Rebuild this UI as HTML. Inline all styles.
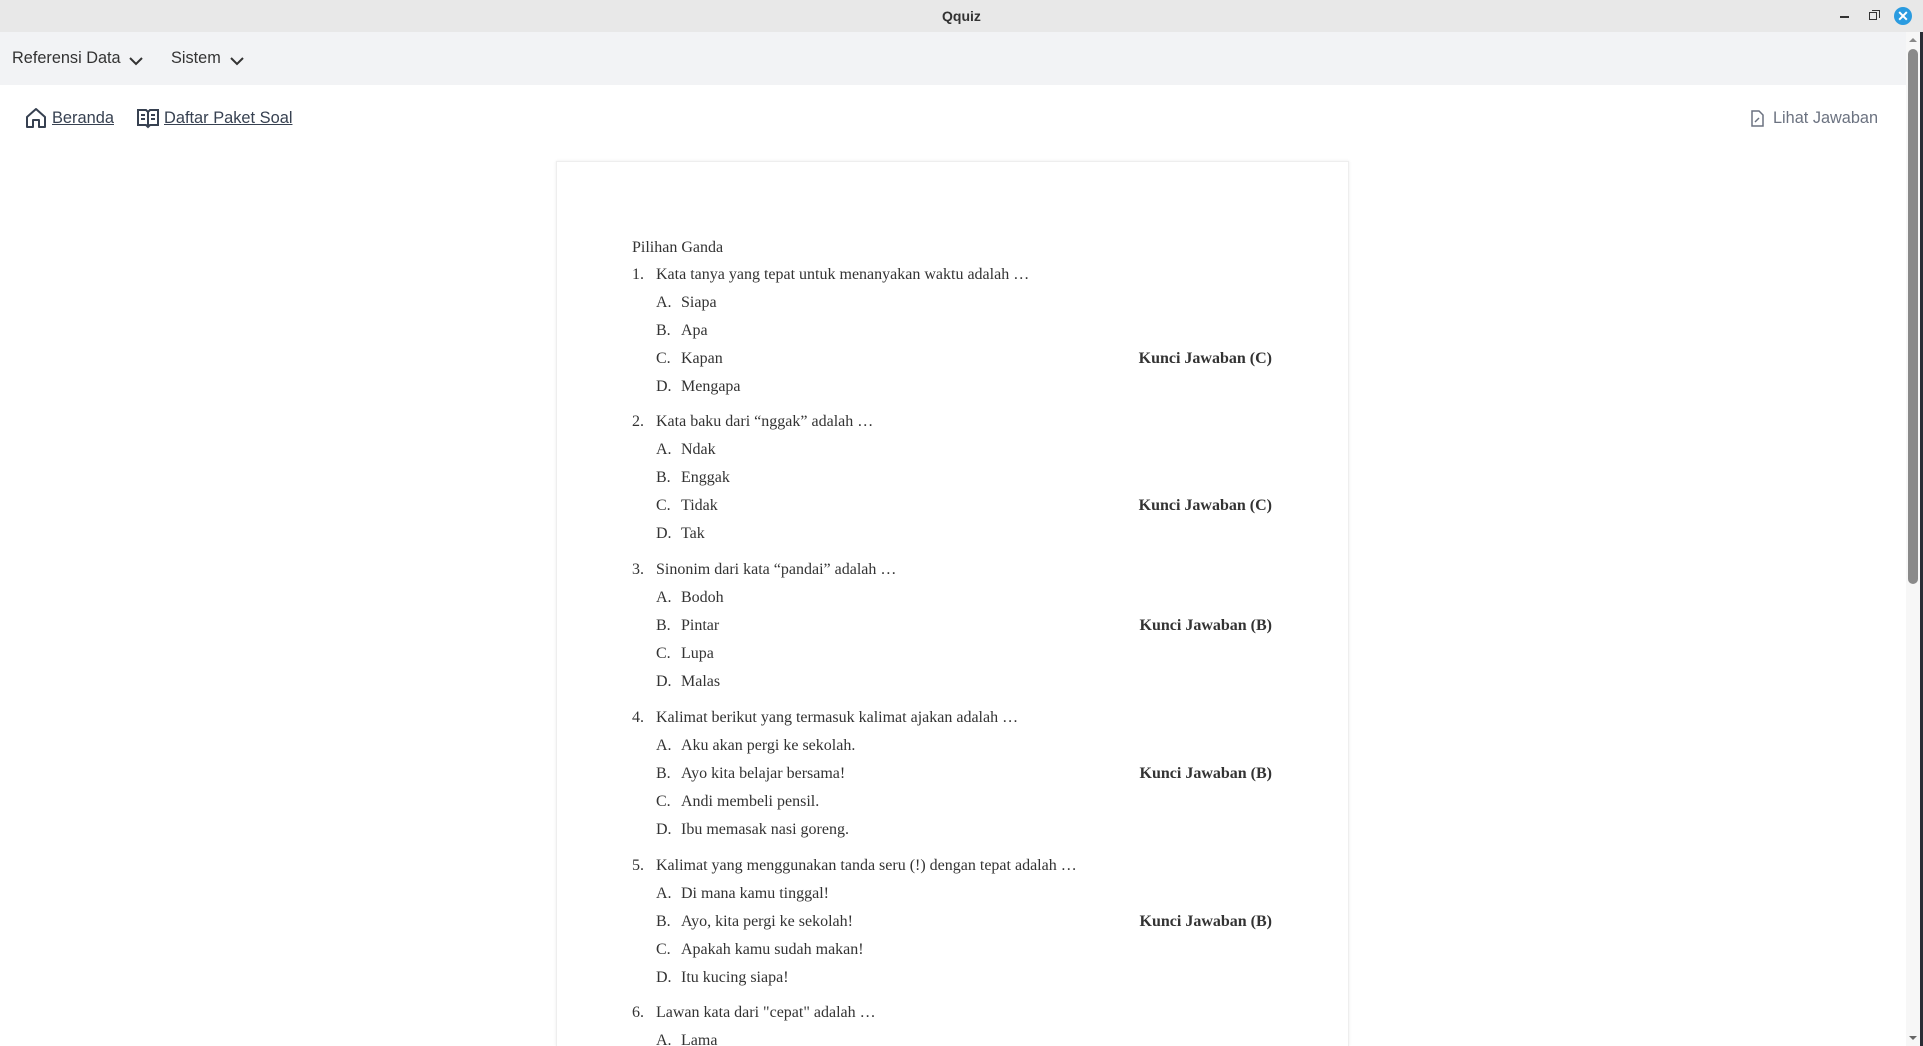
<!DOCTYPE html>
<html><head><meta charset="utf-8"><style>
*{margin:0;padding:0;box-sizing:border-box}
html,body{width:1923px;height:1046px;overflow:hidden;background:#fff;font-family:"Liberation Sans",sans-serif;position:relative}
.title{position:absolute;left:0;top:0;width:1923px;height:32px;background:#e8e8e8;text-align:center;font-weight:bold;font-size:14px;line-height:32px;color:#333}
.menu{position:absolute;left:0;top:32px;width:1906px;height:53px;background:#f2f3f5;font-size:16.3px;color:#333}
.menu span{position:absolute;top:17px}
.bc{position:absolute;top:106px;font-size:16.4px;color:#374151;text-decoration:underline;line-height:24px}
.paper{position:absolute;left:556px;top:161px;width:793px;height:885px;background:#fff;border:1px solid #eee;border-bottom:none;box-shadow:0 0 3px rgba(0,0,0,.08);font-family:"Liberation Serif",serif;font-size:16px;color:#333;overflow:hidden}
.c{position:absolute;left:75px;right:76px;top:74px}
.ph{height:24.5px;line-height:24.5px}
.q{height:147.8px;position:relative}
.l{height:28px;line-height:28px;position:relative;white-space:nowrap}
.n{position:absolute;left:0}
.qt{position:absolute;left:24px}
.ol{position:absolute;left:24px}
.ot{position:absolute;left:49px}
.k{position:absolute;right:0;font-weight:bold}
.sb{position:absolute;left:1906px;top:32px;width:14px;height:1014px;background:#f7f7f7}
.th{position:absolute;left:1908px;top:49px;width:10px;height:535px;background:#8a8a8a;border-radius:5px}
</style></head><body>
<div class="title">Qquiz</div>
<div style="position:absolute;left:1840px;top:16px;width:9px;height:1.5px;background:#333"></div>
<div style="position:absolute;left:1869px;top:12px;width:8px;height:8px;border:1.5px solid #333"></div>
<div style="position:absolute;left:1872px;top:10px;width:8px;height:8px;border-top:1px solid #333;border-right:1px solid #333"></div>
<div style="position:absolute;left:1894px;top:7px;width:18px;height:18px;border-radius:50%;background:#2a9be0;color:#fff;font-size:14px;font-weight:bold;text-align:center;line-height:18px">✕</div>
<div class="menu">
<span style="left:12px">Referensi Data</span>
<svg style="position:absolute;left:128px;top:23px" width="16" height="12" viewBox="0 0 16 12"><path d="M2 3l6 6 6-6" fill="none" stroke="#333" stroke-width="2"/></svg>
<span style="left:171px">Sistem</span>
<svg style="position:absolute;left:229px;top:23px" width="16" height="12" viewBox="0 0 16 12"><path d="M2 3l6 6 6-6" fill="none" stroke="#333" stroke-width="2"/></svg>
</div>
<svg style="position:absolute;left:25px;top:107px" width="22" height="22" viewBox="0 0 22 22"><path d="M2 10L11 2l9 8v10H14v-7H8v7H2z" fill="none" stroke="#374151" stroke-width="2" stroke-linejoin="round"/></svg>
<span class="bc" style="left:52px">Beranda</span>
<svg style="position:absolute;left:137px;top:107px" width="22" height="22" viewBox="0 0 22 22"><path d="M1 3h8l2 2 2-2h8v15h-8l-2 2-2-2H1z M11 5v15 M4 8h4M4 12h4M14 8h4M14 12h4" fill="none" stroke="#374151" stroke-width="2"/></svg>
<span class="bc" style="left:164px">Daftar Paket Soal</span>
<svg style="position:absolute;left:1750px;top:110px" width="14" height="17" viewBox="0 0 14 17"><path d="M2 1h7l4 4v11H2z M5 12l4-4" fill="none" stroke="#6b7280" stroke-width="1.5"/></svg>
<span style="position:absolute;left:1773px;top:106px;font-size:16.3px;color:#6b7280;line-height:24px">Lihat Jawaban</span>
<div class="paper"><div class="c">
<div class="ph">Pilihan Ganda</div>
<div class="q"><div class="l"><span class="n">1.</span><span class="qt">Kata tanya yang tepat untuk menanyakan waktu adalah …</span></div>
<div class="l"><span class="ol">A.</span><span class="ot">Siapa</span></div>
<div class="l"><span class="ol">B.</span><span class="ot">Apa</span></div>
<div class="l"><span class="ol">C.</span><span class="ot">Kapan</span><span class="k">Kunci Jawaban (C)</span></div>
<div class="l"><span class="ol">D.</span><span class="ot">Mengapa</span></div></div>
<div class="q"><div class="l"><span class="n">2.</span><span class="qt">Kata baku dari “nggak” adalah …</span></div>
<div class="l"><span class="ol">A.</span><span class="ot">Ndak</span></div>
<div class="l"><span class="ol">B.</span><span class="ot">Enggak</span></div>
<div class="l"><span class="ol">C.</span><span class="ot">Tidak</span><span class="k">Kunci Jawaban (C)</span></div>
<div class="l"><span class="ol">D.</span><span class="ot">Tak</span></div></div>
<div class="q"><div class="l"><span class="n">3.</span><span class="qt">Sinonim dari kata “pandai” adalah …</span></div>
<div class="l"><span class="ol">A.</span><span class="ot">Bodoh</span></div>
<div class="l"><span class="ol">B.</span><span class="ot">Pintar</span><span class="k">Kunci Jawaban (B)</span></div>
<div class="l"><span class="ol">C.</span><span class="ot">Lupa</span></div>
<div class="l"><span class="ol">D.</span><span class="ot">Malas</span></div></div>
<div class="q"><div class="l"><span class="n">4.</span><span class="qt">Kalimat berikut yang termasuk kalimat ajakan adalah …</span></div>
<div class="l"><span class="ol">A.</span><span class="ot">Aku akan pergi ke sekolah.</span></div>
<div class="l"><span class="ol">B.</span><span class="ot">Ayo kita belajar bersama!</span><span class="k">Kunci Jawaban (B)</span></div>
<div class="l"><span class="ol">C.</span><span class="ot">Andi membeli pensil.</span></div>
<div class="l"><span class="ol">D.</span><span class="ot">Ibu memasak nasi goreng.</span></div></div>
<div class="q"><div class="l"><span class="n">5.</span><span class="qt">Kalimat yang menggunakan tanda seru (!) dengan tepat adalah …</span></div>
<div class="l"><span class="ol">A.</span><span class="ot">Di mana kamu tinggal!</span></div>
<div class="l"><span class="ol">B.</span><span class="ot">Ayo, kita pergi ke sekolah!</span><span class="k">Kunci Jawaban (B)</span></div>
<div class="l"><span class="ol">C.</span><span class="ot">Apakah kamu sudah makan!</span></div>
<div class="l"><span class="ol">D.</span><span class="ot">Itu kucing siapa!</span></div></div>
<div class="q" style="height:56px"><div class="l"><span class="n">6.</span><span class="qt">Lawan kata dari "cepat" adalah …</span></div>
<div class="l"><span class="ol">A.</span><span class="ot">Lama</span></div></div>
</div></div>
<div class="sb"></div>
<div class="th"></div>
<svg style="position:absolute;left:1907px;top:36px" width="12" height="8"><path d="M2 6h8L6 2z" fill="#888"/></svg>
<svg style="position:absolute;left:1907px;top:1034px" width="12" height="8"><path d="M2 2h8L6 6z" fill="#666"/></svg>
<div style="position:absolute;left:1920px;top:32px;width:3px;height:1014px;background:#2a2d35"></div>
</body></html>
